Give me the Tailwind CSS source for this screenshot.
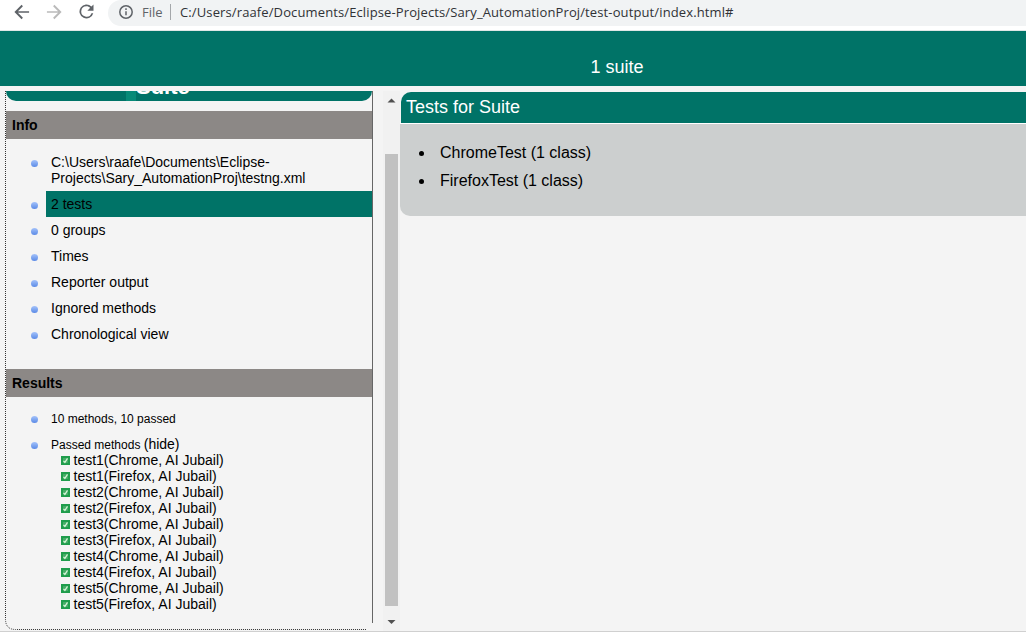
<!DOCTYPE html>
<html lang="en">
<head>
<meta charset="utf-8">
<title>TestNG reports</title>
<script src="https://cdn.jsdelivr.net/npm/@tailwindcss/browser@4"></script>
</head>
<body class="w-[1026px] h-[635px] overflow-hidden bg-white text-black flex flex-col font-['Liberation_Sans',sans-serif]">
<header class="h-[30px] shrink-0 flex items-start bg-white text-[#5f6368]">
  <svg class="ml-[12px] mt-[2px] size-5 shrink-0" viewBox="0 0 24 24" fill="#5f6368"><path d="M20.500 11H7.100l6-6L11.500 3.400 2.900 12l8.600 8.600 1.600-1.600-6-6h13.400z"/></svg>
  <svg class="ml-[12px] mt-[2px] size-5 shrink-0" viewBox="0 0 24 24" fill="#bababa"><path d="M3.500 11h13.400l-6-6 1.600-1.600 8.600 8.600-8.600 8.600-1.600-1.600 6-6H3.500z"/></svg>
  <svg class="ml-[12px] mt-[1px] size-[21px] shrink-0" viewBox="0 0 24 24" fill="#5f6368"><path d="M17.650 6.350A8 8 0 1 0 19.730 14h-2.080A6 6 0 1 1 12 6c1.660 0 3.140.690 4.220 1.780L13 11h7V4z"/></svg>
  <div class="ml-[11px] h-[26px] flex-1 rounded-l-[14px] bg-[#f1f3f4] flex items-center pl-[10px] pb-[2px] font-['Open_Sans',sans-serif] text-[13px]">
    <svg class="size-4 shrink-0" viewBox="0 0 16 16" fill="none" stroke="#5f6368" stroke-width="1.5"><circle cx="8" cy="8" r="6.200"/><path d="M8 7.200v4M8 4.300v1.600"/></svg>
    <span class="ml-[8px] w-[28px] pt-[2px] whitespace-nowrap">File</span>
    <span class="w-px h-4 bg-[#a4a7aa]"></span>
    <span class="ml-[9px] pt-[2px] whitespace-nowrap text-[#303236] tracking-[0.12px]">C:/Users/raafe/Documents/Eclipse-Projects/Sary_AutomationProj/test-output/index.html#</span>
  </div>
</header>
<div class="h-px shrink-0 bg-[#dfe7e6]"></div>
<div class="h-[55px] shrink-0 bg-[#007367] text-white text-[18px] leading-5 pt-[26px] pl-[590.5px]">1 suite</div>
<main class="h-[546px] shrink-0 bg-[#f4f4f4] pt-[5px] flex border-b border-[#d0d0d0]">
  <aside class="ml-[5px] w-[368px] h-[539px] shrink-0 relative">
    <svg class="absolute left-0 top-0 w-[368px] h-[539px]" fill="none" stroke="#333"><path d="M.500 0v528q0 10.500 10 10.500h351" stroke-dasharray="1 1"/><path d="M367.500 0v532" stroke="#666"/></svg>
    <div class="relative mx-px h-[10px] overflow-hidden rounded-b-[10px] bg-[#007367]">
      <span class="absolute left-[120px] top-0 w-[10px] h-[10px] bg-[#078a78]"></span>
      <span class="absolute left-[130px] top-[-17px] text-[22px] leading-[26px] font-bold text-white">Suite</span>
    </div>
    <div class="relative mx-px mt-[10px] h-7 bg-[#8c8886] pl-[6px] text-[14px] leading-7 font-bold">Info</div>
    <ul class="relative mt-[10px] ml-[41px] mr-px text-[14px] leading-4">
      <li class="relative p-[5px]"><i class="absolute left-[-15px] top-[11px] size-[7px] rounded-full bg-linear-to-b from-[#a4c2fa] to-[#5b8ae6]"></i>C:\Users\raafe\Documents\Eclipse-<br>Projects\Sary_AutomationProj\testng.xml</li>
      <li class="relative p-[5px] bg-[#007367]"><i class="absolute left-[-15px] top-[11px] size-[7px] rounded-full bg-linear-to-b from-[#a4c2fa] to-[#5b8ae6]"></i>2 tests</li>
      <li class="relative p-[5px]"><i class="absolute left-[-15px] top-[11px] size-[7px] rounded-full bg-linear-to-b from-[#a4c2fa] to-[#5b8ae6]"></i>0 groups</li>
      <li class="relative p-[5px]"><i class="absolute left-[-15px] top-[11px] size-[7px] rounded-full bg-linear-to-b from-[#a4c2fa] to-[#5b8ae6]"></i>Times</li>
      <li class="relative p-[5px]"><i class="absolute left-[-15px] top-[11px] size-[7px] rounded-full bg-linear-to-b from-[#a4c2fa] to-[#5b8ae6]"></i>Reporter output</li>
      <li class="relative p-[5px]"><i class="absolute left-[-15px] top-[11px] size-[7px] rounded-full bg-linear-to-b from-[#a4c2fa] to-[#5b8ae6]"></i>Ignored methods</li>
      <li class="relative p-[5px]"><i class="absolute left-[-15px] top-[11px] size-[7px] rounded-full bg-linear-to-b from-[#a4c2fa] to-[#5b8ae6]"></i>Chronological view</li>
    </ul>
    <div class="relative mx-px mt-[22px] h-7 bg-[#8c8886] pl-[6px] text-[14px] leading-7 font-bold">Results</div>
    <ul class="relative mt-[9px] ml-[41px] mr-px text-[14px] leading-4">
      <li class="relative p-[5px]"><i class="absolute left-[-15px] top-[10px] size-[7px] rounded-full bg-linear-to-b from-[#a4c2fa] to-[#5b8ae6]"></i><span class="text-[12px] block">10 methods, 10 passed</span></li>
      <li class="relative px-[5px] pt-[4px]"><i class="absolute left-[-15px] top-[10px] size-[7px] rounded-full bg-linear-to-b from-[#a4c2fa] to-[#5b8ae6]"></i><div class="h-4 whitespace-nowrap"><span class="text-[12px]">Passed methods </span>(hide)</div>
        <div id="methods" class="ml-[10px]"></div>
      </li>
    </ul>
  </aside>
  <div class="ml-[10px] w-[17px] h-[540px] shrink-0 bg-[#f1f1f1] flex flex-col items-center">
    <svg class="h-[63px] w-[17px] shrink-0" fill="#505050"><path d="M4.500 11.500h8l-4-4z"/></svg>
    <div class="w-[13px] h-[452px] shrink-0 bg-[#c1c1c1]"></div>
    <svg class="h-[24px] w-[17px] shrink-0" fill="#505050"><path d="M4.500 14h8l-4 4z"/></svg>
  </div>
  <section class="pt-px flex-1">
    <div class="ml-px h-[31px] bg-[#007367] rounded-tl-[10px] text-white text-[18px] leading-[30px] pl-[5px]">Tests for Suite</div>
    <div class="h-px bg-white"></div>
    <ul class="h-[92px] bg-[#cccfcf] rounded-bl-[10px] pt-[15px] pl-[19px] text-[16px] leading-7">
      <li class="flex items-center"><i class="mt-px mr-[16px] size-[5px] rounded-full bg-black"></i>ChromeTest (1 class)</li>
      <li class="flex items-center"><i class="mt-px mr-[16px] size-[5px] rounded-full bg-black"></i>FirefoxTest (1 class)</li>
    </ul>
  </section>
</main>
<template id="row"><div class="h-4 flex items-center whitespace-nowrap"><svg class="size-[9px] mr-[3.5px] shrink-0" viewBox="0 0 9 9"><path fill="#1f9d4c" d="M0 0h9v9H0z"/><path d="M2 2h5v5H2z" fill="#45ad66"/><path d="M2.500 4.800l1.400 1.600 2.600-4" fill="none" stroke="#d8f4da" stroke-width="1.200"/></svg><span></span></div></template>
<script>
const row = document.getElementById('row'), list = document.getElementById('methods');
for (let i = 1; i <= 5; i++) for (const b of ['Chrome', 'Firefox']) {
  const n = row.content.cloneNode(true);
  n.querySelector('span').textContent = `test${i}(${b}, AI Jubail)`;
  list.appendChild(n);
}
</script>
</body>
</html>
